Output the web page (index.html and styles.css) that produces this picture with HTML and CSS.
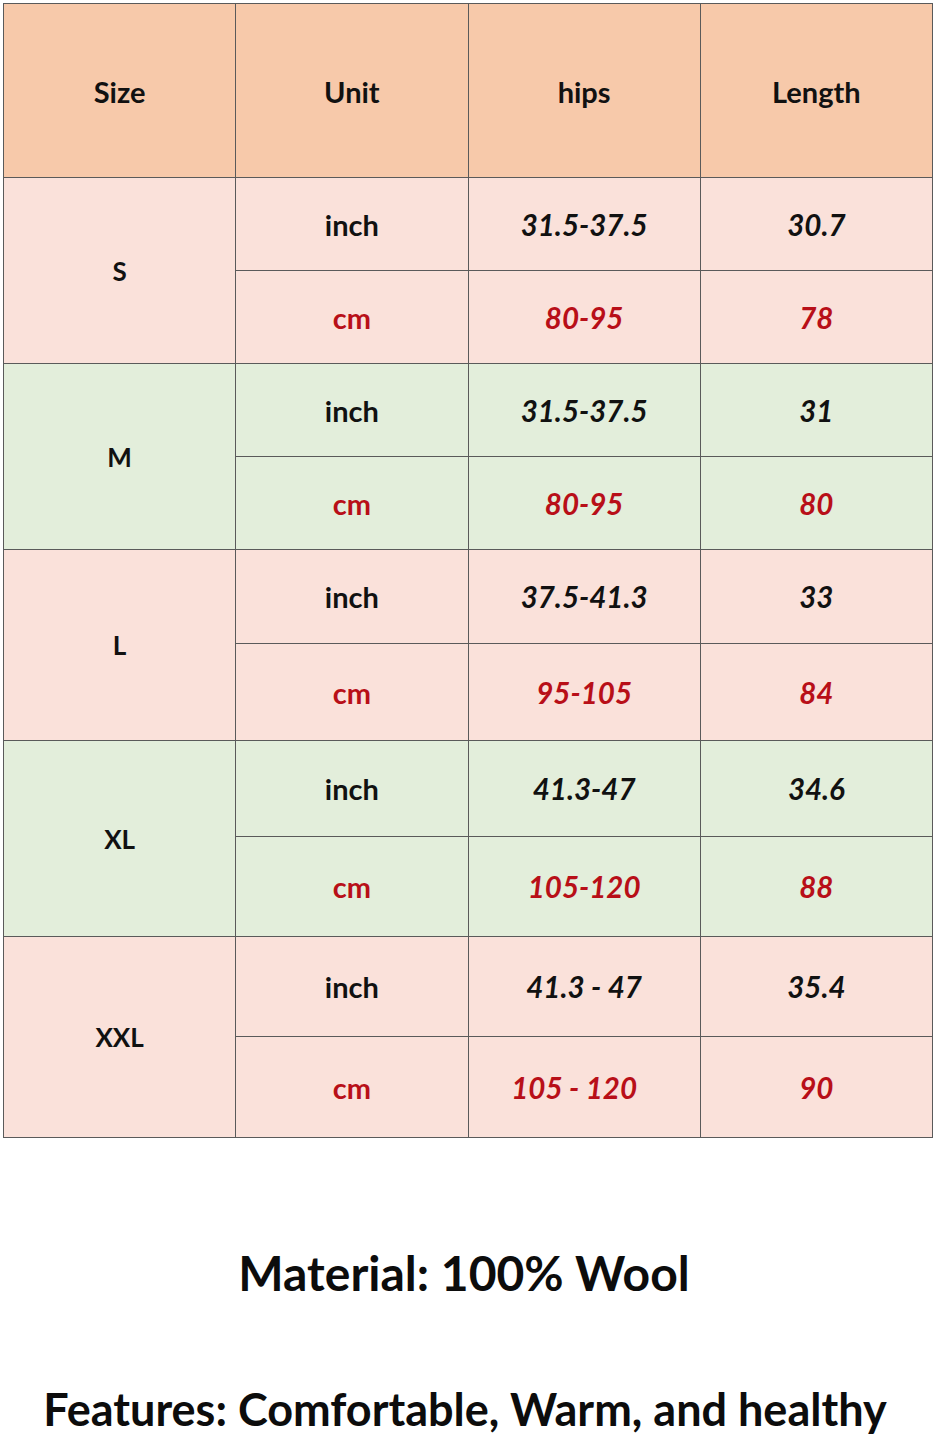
FILE: index.html
```html
<!DOCTYPE html>
<html>
<head>
<meta charset="utf-8">
<link rel="stylesheet" href="styles.css">
</head>
<body>
<div class="page">
<table class="chart">
  <colgroup><col class="c"><col class="c"><col class="c"><col class="c"></colgroup>
  <tr class="head"><th>Size</th><th>Unit</th><th>hips</th><th>Length</th></tr>
  <tr class="pink r1"><td class="size" rowspan="2">S</td><td class="unit">inch</td><td class="val">31.5-37.5</td><td class="val">30.7</td></tr>
  <tr class="pink r1"><td class="unit red">cm</td><td class="val red">80-95</td><td class="val red">78</td></tr>
  <tr class="green r1"><td class="size" rowspan="2">M</td><td class="unit">inch</td><td class="val">31.5-37.5</td><td class="val">31</td></tr>
  <tr class="green r1"><td class="unit red">cm</td><td class="val red">80-95</td><td class="val red">80</td></tr>
  <tr class="pink r2"><td class="size" rowspan="2">L</td><td class="unit">inch</td><td class="val">37.5-41.3</td><td class="val">33</td></tr>
  <tr class="pink r3"><td class="unit red">cm</td><td class="val red">95-105</td><td class="val red">84</td></tr>
  <tr class="green r4"><td class="size" rowspan="2">XL</td><td class="unit">inch</td><td class="val">41.3-47</td><td class="val">34.6</td></tr>
  <tr class="green r5"><td class="unit red">cm</td><td class="val red">105-120</td><td class="val red">88</td></tr>
  <tr class="pink r5"><td class="size" rowspan="2">XXL</td><td class="unit">inch</td><td class="val">41.3 - 47</td><td class="val">35.4</td></tr>
  <tr class="pink r6"><td class="unit red">cm</td><td class="val red shift">105 - 120</td><td class="val red">90</td></tr>
</table>
<p class="material">Material: 100% Wool</p>
<p class="features">Features: Comfortable, Warm, and healthy</p>
</div>
</body>
</html>
```
FILE: styles.css
```css
html, body { margin: 0; padding: 0; background: #ffffff; }
.page {
  width: 936px;
  height: 1437px;
  overflow: hidden;
  font-family: "Lato", "Open Sans", sans-serif;
  color: #111;
}
.chart {
  margin: 3px 0 0 3px;
  width: 930px;
  border-collapse: collapse;
  table-layout: fixed;
}
.chart th, .chart td {
  border: 1px solid #5a5a5a;
  text-align: center;
  vertical-align: middle;
  padding: 0;
  font-weight: 700;
}
.head th {
  background: #f7c9aa;
  height: 171px;
  font-size: 29px;
  font-weight: 700;
  padding-top: 2px;
}
.pink td { background: #fae1da; }
.green td { background: #e3eedb; }
.r1 td { height: 92px; }
.r2 td { height: 93px; }
.r3 td { height: 96px; }
.r4 td { height: 95px; }
.r5 td { height: 99px; }
.r6 td { height: 100px; }
.size { font-size: 26px; }
.unit { font-size: 29px; padding-top: 0; }
.val { font-size: 29.5px; font-style: italic; }
.red { color: #b80f18; }
.shift { padding-right: 20px !important; }
.material {
  margin: 107px 0 0 0;
  padding-right: 8px;
  text-align: center;
  font-size: 48px;
  font-weight: 700;
  line-height: 56px;
  color: #0c0c0c;
}
.features {
  margin: 80px 0 0 0;
  padding-right: 6px;
  text-align: center;
  font-size: 45px;
  font-weight: 700;
  line-height: 56px;
  color: #0c0c0c;
}
```
